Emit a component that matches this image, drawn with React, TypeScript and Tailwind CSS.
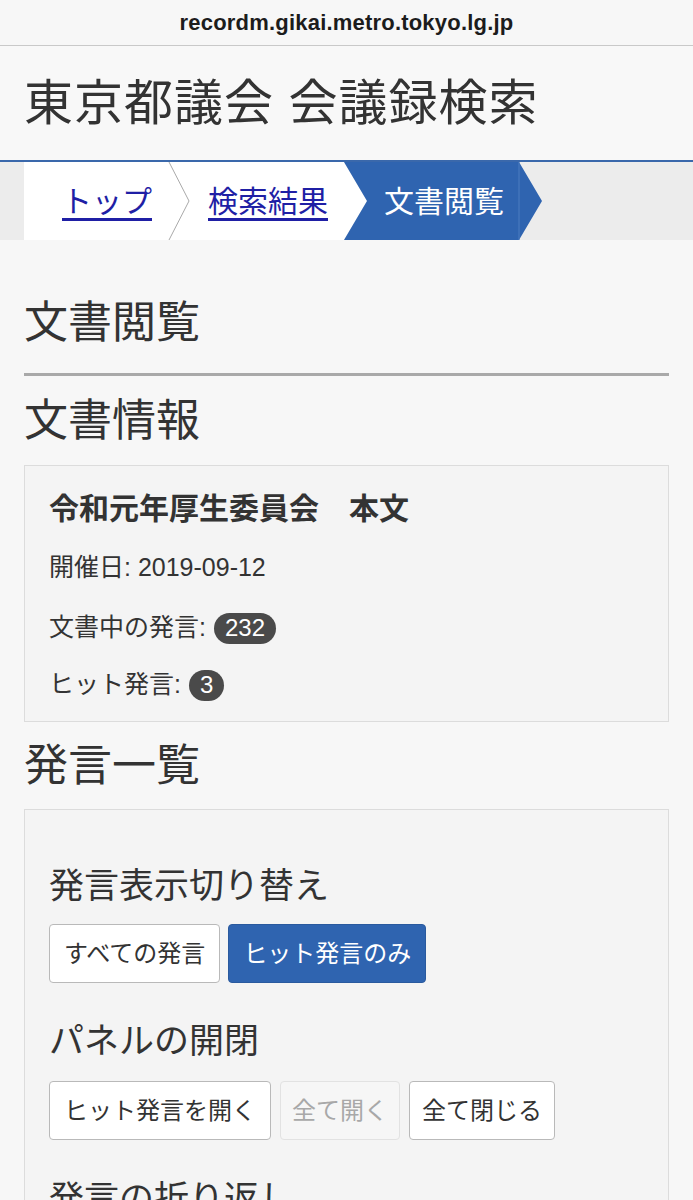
import React from "react";

function Badge({ children }: { children: React.ReactNode }) {
  return (
    <span className="ml-[8px] inline-flex h-[31px] items-center rounded-full bg-[#4a4a4a] px-[11px] text-[24px] leading-none text-white">
      {children}
    </span>
  );
}

function Btn({
  children,
  variant = "default",
  pad = "px-[14px]",
}: {
  children: React.ReactNode;
  variant?: "default" | "active" | "disabled";
  pad?: string;
}) {
  const styles = {
    default: "bg-white border-[#b9b9b9] text-[#333]",
    active: "bg-[#2f64b0] border-[#2a5a9e] text-white",
    disabled: "bg-[#f6f6f6] border-[#e2e2e2] text-[#a8a8a8]",
  }[variant];
  return (
    <button
      className={`flex h-[59px] items-center rounded-[4px] border-[1.5px] text-[24px] leading-none ${pad} ${styles}`}
    >
      {children}
    </button>
  );
}

export default function App() {
  return (
    <div className="min-h-[1200px] bg-[#f7f7f7] font-['Liberation_Sans','Noto_Sans_CJK_JP',sans-serif] text-[#333]">
      {/* browser address bar */}
      <div className="flex h-[46px] items-center justify-center border-b border-[#c9c9c9] bg-[#f7f7f7]">
        <span className="text-[22px] font-semibold tracking-[0.2px] text-[#1c1c1c]">recordm.gikai.metro.tokyo.lg.jp</span>
      </div>

      {/* site header */}
      <header className="flex h-[114px] items-center bg-[#f8f8f8] px-6">
        <h1 className="text-[49px] leading-none font-normal tracking-[1px] text-[#333]">
          東京都議会 会議録検索
        </h1>
      </header>

      {/* breadcrumb */}
      <nav className="flex h-[80px] border-t-[2px] border-[#3a68ab] bg-[#ececec] pl-6">
        <div className="flex items-center bg-white pl-[38px] pr-[16px] text-[30px]">
          <a href="#" className="text-[#1f1fa5] underline underline-offset-[6px]">
            トップ
          </a>
          <svg width="56" height="78" viewBox="0 0 56 78" className="shrink-0">
            <polyline points="17,0 37,39 17,78" fill="none" stroke="#a9a9a9" strokeWidth="1" />
          </svg>
          <a href="#" className="text-[#1f1fa5] underline underline-offset-[6px]">
            検索結果
          </a>
        </div>
        <div className="relative flex w-[198px] items-center">
          <svg width="198" height="78" viewBox="0 0 198 78" className="absolute inset-0">
            <polygon points="0,0 23,39 0,78" fill="#ffffff" />
            <polygon points="0,0 175,0 198,39 175,78 0,78 23,39" fill="#2f64b0" />
            <line x1="175" y1="0" x2="175" y2="78" stroke="#4d7cc0" strokeWidth="1" />
          </svg>
          <span className="relative pl-[40px] text-[30px] text-white">文書閲覧</span>
        </div>
      </nav>

      <main className="px-6">
        <h2 className="mt-[58px] text-[44px] leading-[50px] font-normal">文書閲覧</h2>
        <hr className="mt-[25px] border-t-[3px] border-[#a9a9a9]" />

        <h2 className="mt-[20px] text-[44px] leading-[50px] font-normal">文書情報</h2>
        <section className="mt-[19px] border border-[#dcdcdc] bg-[#f4f4f4] px-[24px] pt-[22px] pb-[16px]">
          <div className="flex h-[40px] items-center text-[30px] font-bold">令和元年厚生委員会　本文</div>
          <div className="mt-[20px] flex h-[40px] items-center text-[25px]">開催日: 2019-09-12</div>
          <div className="mt-[20px] flex h-[40px] items-center text-[25px]">
            文書中の発言:<Badge>232</Badge>
          </div>
          <div className="mt-[17px] flex h-[40px] items-center text-[25px]">
            ヒット発言:<Badge>3</Badge>
          </div>
        </section>

        <h2 className="mt-[19px] text-[44px] leading-[50px] font-normal">発言一覧</h2>
        <section className="mt-[18px] border border-[#dcdcdc] bg-[#f4f4f4] px-[24px] pt-[55px] pb-[40px]">
          <h3 className="text-[35px] leading-[42px] font-normal">発言表示切り替え</h3>
          <div className="mt-[17px] flex gap-[8px]">
            <Btn>すべての発言</Btn>
            <Btn variant="active">ヒット発言のみ</Btn>
          </div>

          <h3 className="mt-[37px] text-[35px] leading-[42px] font-normal">パネルの開閉</h3>
          <div className="mt-[19px] flex gap-[9px]">
            <Btn>ヒット発言を開く</Btn>
            <Btn variant="disabled" pad="px-[11px]">全て開く</Btn>
            <Btn pad="px-[12px]">全て閉じる</Btn>
          </div>

          <h3 className="mt-[38px] text-[35px] leading-[42px] font-normal">発言の折り返し</h3>
        </section>
      </main>
    </div>
  );
}
